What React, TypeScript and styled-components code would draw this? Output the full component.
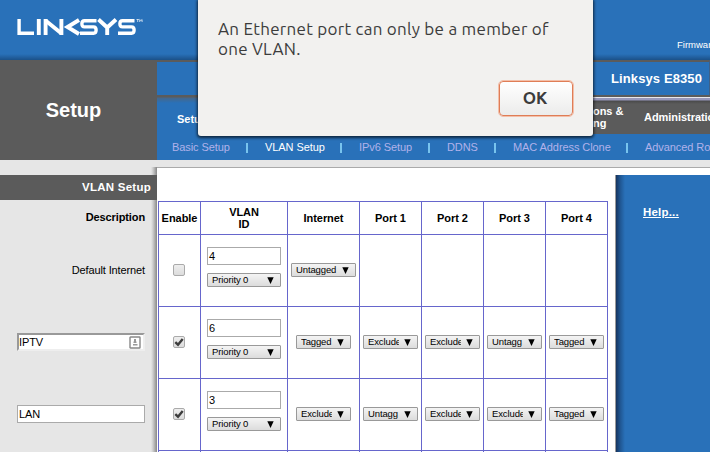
import React from "react";
import styled, { createGlobalStyle } from "styled-components";

const blue = "#2971b9";
const grey = "#5b5b5b";
const line = "#6666cc";

const GlobalStyle = createGlobalStyle`
  *, *::before, *::after { box-sizing: border-box; }
  body { margin: 0; overflow: hidden; background: #e6e6e6; }
`;

const Page = styled.div`
  position: relative;
  display: flex;
  flex-direction: column;
  width: 710px;
  height: 452px;
  overflow: hidden;
  font-family: "Liberation Sans", Arial, sans-serif;
  font-size: 11px;
  color: #000;
  background: #e6e6e6;
`;

const Banner = styled.header`
  display: flex;
  justify-content: space-between;
  height: 60px;
  flex: none;
  padding: 18px 0 0 17px;
  background: linear-gradient(${blue} 54px, #1b5189 60px);
`;

const Logo = styled.svg`
  display: block;
  width: 126px;
  height: 18px;
`;

const Firmware = styled.div`
  width: 33px;
  margin-top: 21px;
  overflow: hidden;
  font-size: 9.5px;
  line-height: 12px;
  white-space: nowrap;
  color: #fff;
`;

const Masthead = styled.div`
  display: grid;
  grid-template-columns: 157px 553px;
  height: 100px;
  flex: none;
`;

const SectionTitle = styled.div`
  display: flex;
  align-items: center;
  justify-content: center;
  padding-right: 10px;
  font-size: 20px;
  font-weight: bold;
  color: #fff;
  background: ${grey};
`;

const NavArea = styled.div`
  display: grid;
  grid-template-rows: 35px 39px 26px;
  background: ${blue};
`;

const ModelBar = styled.div`
  display: flex;
  align-items: center;
  justify-content: flex-end;
  padding-right: 7px;
  border-top: 2px solid ${grey};
  border-right: 1px solid #3d618a;
  font-size: 13px;
  font-weight: bold;
  letter-spacing: 0.1px;
  color: #fff;
`;

const TabBar = styled.div`
  display: grid;
  grid-template-columns: 436px 117px;
  font-weight: bold;
  line-height: 12px;
  color: #fff;
`;

const ActiveTab = styled.div`
  padding: 18px 0 0 20px;
  background: linear-gradient(${grey} 0, ${grey} 2px, #45678b 3px, ${blue} 8px);
`;

const InactiveTabs = styled.div`
  display: flex;
  align-items: center;
  border-top: 2px solid ${grey};
  background: linear-gradient(#e7e7ee 0, #e7e7ee 1px, #9898bb 1px, #9898bb 3px, #4a4a4a 4px, ${grey} 7px);
`;

const TabLabel = styled.div<{ $width: number }>`
  width: ${(p) => p.$width}px;
  flex: none;
  padding-top: 2px;
  overflow: hidden;
  letter-spacing: -0.05px;
  white-space: pre;
`;

const SubNav = styled.nav`
  display: flex;
  align-items: center;
  padding-left: 15px;
  overflow: hidden;
  letter-spacing: -0.08px;
  white-space: nowrap;
`;

const SubLink = styled.span<{ $active?: boolean; $width: number }>`
  width: ${(p) => p.$width}px;
  flex: none;
  color: ${(p) => (p.$active ? "#fff" : "#b1b1ea")};
`;

const Divider = styled.i<{ $gap: number }>`
  width: 2px;
  height: 10px;
  flex: none;
  margin: 1px ${(p) => p.$gap}px 0 0;
  background: #78c4ee;
`;

const Body = styled.main`
  display: grid;
  grid-template-columns: 157px 458px 95px;
  height: 292px;
`;

const Side = styled.aside`
  padding-top: 15px;
  letter-spacing: -0.12px;
  background: linear-gradient(90deg, transparent 151px, #ccc 153px, #888 157px) 0 7px no-repeat;
`;

const SideHeading = styled.h2`
  height: 25px;
  margin: 0;
  padding-right: 6px;
  font-size: 11.5px;
  line-height: 25px;
  letter-spacing: 0.25px;
  text-align: right;
  color: #fff;
  background: ${grey};
`;

const SideRow = styled.div<{ $height: number; $bold?: boolean }>`
  display: flex;
  align-items: center;
  justify-content: flex-end;
  height: ${(p) => p.$height}px;
  padding-right: 12px;
  font-weight: ${(p) => (p.$bold ? "bold" : "normal")};
`;

const NameField = styled.div<{ $inset?: boolean }>`
  display: flex;
  align-items: center;
  justify-content: space-between;
  width: 128px;
  height: 18px;
  padding: 0 3px 0 1px;
  border: 1px solid #aaa;
  background: #fff;
  ${(p) => p.$inset && `
    border-width: 2px;
    border-color: #999 #eee #eee #999;
    padding: 0 2px 0 0;
  `}
`;

const Content = styled.section`
  padding: 33px 0 0 1px;
  margin-top: 7px;
  border-top: 1px solid #aaa;
  background: #fff;
`;

const Table = styled.div`
  display: grid;
  width: 450px;
  grid-template-columns: 42px 87px 72px 62px 62px 62px 62px;
  grid-template-rows: 33px 72px 72px 72px 72px;
  border-top: 1px solid ${line};
  border-left: 1px solid ${line};
`;

const Cell = styled.div<{ $head?: boolean; $stacked?: boolean }>`
  display: flex;
  flex-direction: column;
  align-items: center;
  justify-content: center;
  gap: 8px;
  padding-bottom: ${(p) => (p.$head ? 0 : p.$stacked ? 7 : 1)}px;
  border-right: 1px solid ${line};
  border-bottom: 1px solid ${line};
  line-height: 12px;
  letter-spacing: -0.05px;
  text-align: center;
  white-space: pre-line;
  font-weight: ${(p) => (p.$head ? "bold" : "normal")};
`;

const IdField = styled.div`
  width: 74px;
  height: 18px;
  padding-left: 1px;
  border: 1px solid #aaa;
  text-align: left;
  line-height: 17px;
`;

const SelectBox = styled.div<{ $width: number }>`
  display: flex;
  align-items: center;
  justify-content: space-between;
  width: ${(p) => p.$width}px;
  height: 14px;
  padding: 0 6px 0 4px;
  border: 1px solid #999;
  border-radius: 1px;
  background: linear-gradient(#f4f4f4, #dcdcdc);
  font-size: 9.5px;
  line-height: 12px;
  letter-spacing: -0.12px;
  text-align: left;
`;

const SelectText = styled.span`
  flex: 1;
  overflow: hidden;
  margin-right: 5px;
  white-space: nowrap;
`;

const Check = styled.div`
  display: grid;
  place-items: center;
  width: 12px;
  height: 12px;
  margin-right: 1px;
  border: 1px solid #aaa;
  border-radius: 2px;
  background: linear-gradient(#eee, #dcdcdc);
`;

const HelpColumn = styled.aside`
  display: flex;
  flex-direction: column;
  margin-top: 7px;
  border-top: 1px solid #aaa;
  background: #fff;
`;

const HelpPanel = styled.div`
  flex: 1;
  margin-top: 7px;
  padding: 31px 0 0 27px;
  border-left: 1px solid #999;
  background: linear-gradient(90deg, #16345f 0, #1f5590 4px, ${blue} 9px);
`;

const HelpLink = styled.a`
  font-size: 11.5px;
  font-weight: bold;
  letter-spacing: 0.2px;
  color: #fff;
  text-decoration: underline;
`;

const Dialog = styled.div`
  position: absolute;
  top: 0;
  left: 198px;
  display: flex;
  flex-direction: column;
  width: 395px;
  height: 136px;
  padding: 19px 20px 20px;
  border-radius: 0 0 3px 3px;
  background: #f2f1ef;
  box-shadow: 0 1px 3px 1px rgba(0, 0, 0, 0.65);
  font-family: Ubuntu, "Noto Sans", sans-serif;
  color: #3c3c3c;
`;

const Message = styled.p`
  margin: 0;
  font-size: 17px;
  line-height: 20px;
  letter-spacing: 0.27px;
  white-space: pre;
`;

const OkButton = styled.button`
  align-self: flex-end;
  width: 74px;
  height: 35px;
  margin-top: auto;
  padding: 0 2px 2px 0;
  border: 1px solid #df7d56;
  border-radius: 4px;
  outline: 1px solid #f3bfa9;
  background: linear-gradient(#fff, #ececeb);
  font: bold 17px Ubuntu, "Noto Sans", sans-serif;
  color: #3c3c3c;
`;

const LinksysLogo = () => (
  <Logo viewBox="0 0 126 18" fill="none" stroke="#fff" strokeWidth="3.4">
    <path d="M2.100 1v14.300H17" />
    <path d="M21.800 1v16M28.600 17V1M44.400 17V1" strokeWidth="3.900" />
    <path d="M28.500 2.500L44.500 15.500M62 2L50.500 9l11.500 7" strokeWidth="3.900" />
    <path d="M79.500 2.700H67.500q-2.600 0-2.600 3.100t2.600 3.100h9q2.600 0 2.600 3.200t-2.600 3.200H63M117.500 2.700h-12q-2.600 0-2.600 3.100t2.600 3.100h9q2.600 0 2.600 3.200t-2.600 3.200H101" />
    <path d="M81.500 1.500l8.700 8L99 1.500M90.200 9v8" strokeWidth="3.900" />
    <path d="M119.500 1.500h2.400M120.700 1.500v2.500M122.700 4V1.500l1.200 1.200 1.200-1.200V4" strokeWidth=".7" />
  </Logo>
);

const Dropdown = ({ text, width = 55 }: { text: string; width?: number }) => (
  <SelectBox $width={width}>
    <SelectText>{text}</SelectText>
    <svg width="7" height="7" viewBox="0 0 7 7"><path d="M.3.3h6.400L3.500 7z" fill="#000" /></svg>
  </SelectBox>
);

const Checkbox = ({ checked }: { checked: boolean }) => (
  <Check>
    {checked && (
      <svg width="10" height="10" viewBox="0 0 10 10">
        <path d="M1.300 5.200l2.700 2.500L8.700 2" fill="none" stroke="#3d3d3d" strokeWidth="2.400" />
      </svg>
    )}
  </Check>
);

const AutofillIcon = () => (
  <svg width="12" height="13" viewBox="0 0 12 13">
    <rect x="1" y="1" width="10" height="11" rx=".5" fill="#fff" stroke="#888" strokeWidth="1.400" />
    <path d="M5 3h2v2.500H5zM4.500 5.500h3V7h-3zM4 8h4.500v1.500H4z" fill="#999" />
  </svg>
);

const headings = ["Enable", "VLAN\nID", "Internet", "Port 1", "Port 2", "Port 3", "Port 4"];
const rows = [
  { id: "4", on: false, ports: ["Untagged", "", "", "", ""] },
  { id: "6", on: true, ports: ["Tagged", "Exclude", "Exclude", "Untagg", "Tagged"] },
  { id: "3", on: true, ports: ["Exclude", "Untagg", "Exclude", "Exclude", "Tagged"] },
];

export default function App() {
  return (
    <Page>
      <GlobalStyle />
      <Banner>
        <LinksysLogo />
        <Firmware>Firmware</Firmware>
      </Banner>
      <Masthead>
        <SectionTitle>Setup</SectionTitle>
        <NavArea>
          <ModelBar>Linksys E8350</ModelBar>
          <TabBar>
            <ActiveTab>Setup</ActiveTab>
            <InactiveTabs>
              <TabLabel $width={51}>{"ons &\nng"}</TabLabel>
              <TabLabel $width={66}>Administration</TabLabel>
            </InactiveTabs>
          </TabBar>
          <SubNav>
            <SubLink $width={74}>Basic Setup</SubLink>
            <Divider $gap={17} />
            <SubLink $active $width={75}>VLAN Setup</SubLink>
            <Divider $gap={17} />
            <SubLink $width={69}>IPv6 Setup</SubLink>
            <Divider $gap={17} />
            <SubLink $width={47}>DDNS</SubLink>
            <Divider $gap={17} />
            <SubLink $width={113}>MAC Address Clone</SubLink>
            <Divider $gap={17} />
            <SubLink $width={100}>Advanced Routing</SubLink>
          </SubNav>
        </NavArea>
      </Masthead>
      <Body>
        <Side>
          <SideHeading>VLAN Setup</SideHeading>
          <SideRow $height={34} $bold>Description</SideRow>
          <SideRow $height={72}>Default Internet</SideRow>
          <SideRow $height={72}>
            <NameField $inset>IPTV<AutofillIcon /></NameField>
          </SideRow>
          <SideRow $height={72}>
            <NameField>LAN</NameField>
          </SideRow>
        </Side>
        <Content>
          <Table>
            {headings.map((h) => <Cell key={h} $head>{h}</Cell>)}
            {rows.map((row) => (
              <React.Fragment key={row.id}>
                <Cell><Checkbox checked={row.on} /></Cell>
                <Cell $stacked>
                  <IdField>{row.id}</IdField>
                  <Dropdown text="Priority 0" width={74} />
                </Cell>
                {row.ports.map((port, i) => (
                  <Cell key={i}>{port && <Dropdown text={port} width={port === "Untagged" ? 65 : 55} />}</Cell>
                ))}
              </React.Fragment>
            ))}
            {headings.map((h) => <Cell key={h} />)}
          </Table>
        </Content>
        <HelpColumn>
          <HelpPanel><HelpLink>Help...</HelpLink></HelpPanel>
        </HelpColumn>
      </Body>
      <Dialog role="alertdialog">
        <Message>{"An Ethernet port can only be a member of\none VLAN."}</Message>
        <OkButton>OK</OkButton>
      </Dialog>
    </Page>
  );
}
